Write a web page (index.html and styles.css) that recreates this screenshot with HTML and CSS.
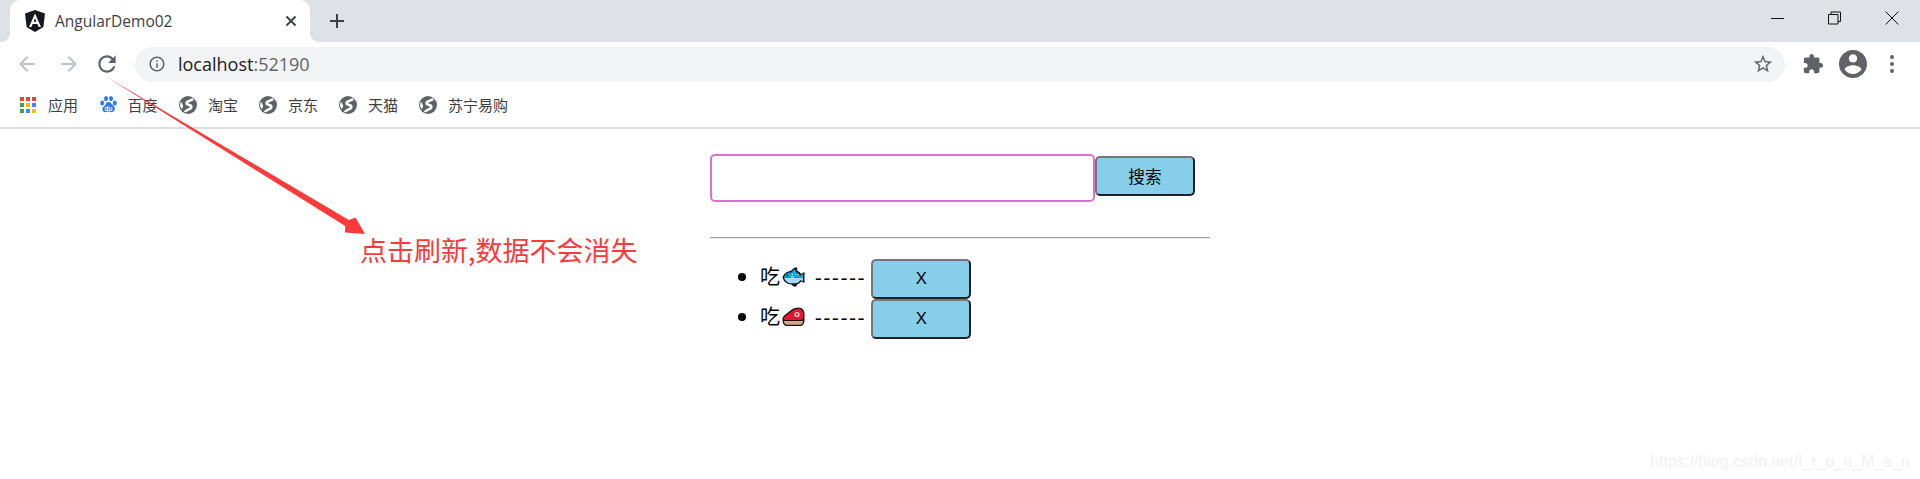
FILE: index.html
```html
<!DOCTYPE html>
<html lang="zh">
<head>
<meta charset="utf-8">
<title>AngularDemo02</title>
<link rel="stylesheet" href="styles.css">
</head>
<body>
<svg class="defs" width="0" height="0">
  <symbol id="globe" viewBox="0 0 18 18">
    <circle cx="9" cy="9" r="9" fill="#5f6368"/>
    <path d="M14 2.800C11.500 5.300 7.500 4.800 7.500 7.300 7.500 9.300 12.300 8.300 12.300 11 12.300 13.500 7.500 13 6 16" stroke="#fff" stroke-width="2.600" fill="none"/>
    <path d="M1.500 5.500C3 7.500 4 8 4 10S3 12 2.500 13L1 10Z" fill="#fff"/>
  </symbol>
</svg>

<header class="browser">
  <div class="tabbar">
    <div class="tab">
      <svg class="tab-logo" viewBox="0 0 20 22"><path d="M10 0 20 3.600 18.400 17 10 22 1.600 17 0 3.600Z" fill="#15181d"/><path d="M10 3.500 4 17h2.400l1.200-3h4.800l1.200 3H16ZM8.500 11.800 10 8.200l1.500 3.600Z" fill="#fff"/></svg>
      <span class="tab-title">AngularDemo02</span>
      <svg class="tab-close" viewBox="0 0 12 12"><path d="M1.500 1.500l9 9m0-9l-9 9" stroke="#3c4043" stroke-width="1.900" fill="none"/></svg>
    </div>
    <svg class="new-tab" viewBox="0 0 16 16"><path d="M8 1v14M1 8h14" stroke="#3c4043" stroke-width="2" fill="none"/></svg>
    <div class="window-controls">
      <svg class="win-icon" viewBox="0 0 14 14"><path d="M0 7.500h13" stroke="#111" fill="none"/></svg>
      <svg class="win-icon" viewBox="0 0 14 14"><path d="M.5 3.500h9.500v9.500H.5ZM3 3.500V1h9.500v9.500H10" stroke="#111" fill="none"/></svg>
      <svg class="win-icon" viewBox="0 0 14 14"><path d="M.5.500l13 13m0-13l-13 13" stroke="#111" fill="none"/></svg>
    </div>
  </div>

  <div class="toolbar">
    <svg class="nav-icon back" viewBox="0 0 24 24"><path d="M20 11H7.830l5.590-5.590L12 4l-8 8 8 8 1.410-1.410L7.830 13H20v-2z" fill="#bdc1c6"/></svg>
    <svg class="nav-icon forward" viewBox="0 0 24 24"><path d="M4 11h12.170l-5.590-5.590L12 4l8 8-8 8-1.410-1.410L16.170 13H4v-2z" fill="#bdc1c6"/></svg>
    <svg class="reload" viewBox="0 0 24 24"><path d="M17.650 6.350C16.200 4.900 14.210 4 12 4c-4.420 0-7.990 3.580-7.990 8s3.570 8 7.990 8c3.730 0 6.840-2.550 7.730-6h-2.080c-.82 2.330-3.040 4-5.650 4-3.310 0-6-2.690-6-6s2.690-6 6-6c1.660 0 3.140.69 4.220 1.780L13 11h7V4l-2.350 2.350z" fill="#5f6368"/></svg>
    <div class="omnibox">
      <svg class="info" viewBox="0 0 24 24"><path d="M11 7h2v2h-2zm0 4h2v6h-2zm1-9C6.480 2 2 6.480 2 12s4.480 10 10 10 10-4.480 10-10S17.520 2 12 2zm0 18c-4.410 0-8-3.590-8-8s3.590-8 8-8 8 3.590 8 8-3.590 8-8 8z" fill="#5f6368"/></svg>
      <span class="url">localhost<span class="port">:52190</span></span>
      <svg class="star" viewBox="0 0 24 24"><path d="M22 9.240l-7.190-.62L12 2 9.190 8.630 2 9.240l5.460 4.730L5.820 21 12 17.270 18.180 21l-1.630-7.030L22 9.240zM12 15.400l-3.760 2.270 1-4.280-3.320-2.880 4.380-.38L12 6.100l1.710 4.040 4.380.38-3.320 2.880 1 4.280L12 15.400z" fill="#5f6368"/></svg>
    </div>
    <svg class="puzzle" viewBox="0 0 24 24"><path d="M20.500 11H19V7c0-1.100-.9-2-2-2h-4V3.500C13 2.120 11.880 1 10.500 1S8 2.120 8 3.500V5H4c-1.100 0-1.990.9-1.990 2v3.800H3.500c1.490 0 2.700 1.210 2.700 2.700s-1.210 2.700-2.700 2.700H2V20c0 1.100.9 2 2 2h3.800v-1.500c0-1.490 1.210-2.700 2.700-2.700 1.490 0 2.700 1.210 2.700 2.700V22H17c1.100 0 2-.9 2-2v-4h1.500c1.380 0 2.500-1.120 2.500-2.500S21.880 11 20.500 11z" fill="#5f6368"/></svg>
    <svg class="avatar" viewBox="2 2 20 20"><path d="M12 2C6.480 2 2 6.480 2 12s4.480 10 10 10 10-4.480 10-10S17.520 2 12 2zm0 3c1.660 0 3 1.340 3 3s-1.340 3-3 3-3-1.340-3-3 1.340-3 3-3zm0 14.200c-2.500 0-4.710-1.280-6-3.220.03-1.990 4-3.080 6-3.080 1.990 0 5.970 1.090 6 3.080-1.290 1.940-3.500 3.220-6 3.220z" fill="#5f6368"/></svg>
    <svg class="menu" viewBox="0 0 6 20"><circle cx="3" cy="3" r="2" fill="#5f6368"/><circle cx="3" cy="10" r="2" fill="#5f6368"/><circle cx="3" cy="17" r="2" fill="#5f6368"/></svg>
  </div>

  <nav class="bookmarks">
    <a class="bookmark">
      <svg class="bm-icon" viewBox="0 0 16 16">
        <rect width="4" height="4" fill="#ea4335"/><rect x="6" width="4" height="4" fill="#ea4335"/><rect x="12" width="4" height="4" fill="#ea4335"/>
        <rect y="6" width="4" height="4" fill="#34a853"/><rect x="6" y="6" width="4" height="4" fill="#fbbc04"/><rect x="12" y="6" width="4" height="4" fill="#4285f4"/>
        <rect y="12" width="4" height="4" fill="#34a853"/><rect x="6" y="12" width="4" height="4" fill="#4285f4"/><rect x="12" y="12" width="4" height="4" fill="#fbbc04"/>
      </svg>应用</a>
    <a class="bookmark">
      <svg class="bm-icon paw" viewBox="0 0 17 17">
        <ellipse cx="2.200" cy="7" rx="2" ry="2.500" fill="#2b7bf0"/><ellipse cx="6" cy="2.600" rx="2" ry="2.600" fill="#2b7bf0"/><ellipse cx="11" cy="2.600" rx="2" ry="2.600" fill="#2b7bf0"/><ellipse cx="14.800" cy="7" rx="2" ry="2.500" fill="#2b7bf0"/>
        <path d="M8.500 6c2.500 0 3 2.200 4.500 3.200s2.300 2.800 1.700 4.500-2.200 2.500-3.500 2.500-1.700-.6-2.700-.6-1.500.6-3 .6-3.200-1-3.200-2.900S3.700 10.500 5 9.200 6 6 8.500 6Z" fill="#2b7bf0"/>
        <text class="du" x="8.500" y="14.600" text-anchor="middle">du</text>
      </svg>百度</a>
    <a class="bookmark"><svg class="bm-icon globe"><use href="#globe"/></svg>淘宝</a>
    <a class="bookmark"><svg class="bm-icon globe"><use href="#globe"/></svg>京东</a>
    <a class="bookmark"><svg class="bm-icon globe"><use href="#globe"/></svg>天猫</a>
    <a class="bookmark"><svg class="bm-icon globe"><use href="#globe"/></svg>苏宁易购</a>
  </nav>
</header>

<main class="app">
  <div class="search">
    <input class="search-input" type="text" aria-label="搜索">
    <button class="btn btn-search">搜索</button>
  </div>
  <hr class="rule">
  <ul class="todo">
    <li class="todo-item">吃<svg class="emoji" viewBox="0 0 23 20">
        <path d="M.5 10.500C1.500 7 4.500 4.500 8.500 4L12.500.5H15L15.500 4C17.500 4.500 18.500 6 19 7L22.500 5V16L19 14.500C18 16 16.500 17 15 17.500L14.500 19.500H11.500L9.500 17.500C5 17.500 1.500 14.500.5 10.500Z" fill="#0d1a22"/>
        <path d="M2 10C3 7.500 5.500 5.500 9.300 5.300L13 2 14 5.200C16 5.600 17.300 7.300 18 9L21 7V10Z" fill="#13a6e4"/>
        <path d="M2 10.500H21V14.300L18.300 13C17.500 15 15.500 16.300 13 16.300H10C6 16.300 3 14 2 10.500Z" fill="#a5daf2"/>
        <circle cx="5.500" cy="8.500" r="1.100" fill="#0d1a22"/>
        <path d="M10 7.500h1M13 7.500h1M16 7.500h1M9 10h3" stroke="#dff3fb" fill="none"/>
      </svg><span class="dashes">------</span><button class="btn btn-remove">X</button></li>
    <li class="todo-item">吃<svg class="emoji" viewBox="0 0 23 20">
        <path d="M.5 12.500C.5 9 3.500 7.500 6 5.500 8.500 3 12 .5 16.500.5 20.500.5 22.500 3.500 22.500 7.500V13.500C22.500 17 20.500 19 18 19H5C2 19 .5 16.500.5 12.500Z" fill="#16110f"/>
        <path d="M1.800 14H21.200C21 16.300 19.800 17.700 18 17.700H5C3.200 17.700 2 16.300 1.800 14Z" fill="#d9a68c"/>
        <path d="M1.800 12.500C1.800 9.800 4.500 8.600 7 6.600 9.500 4 12.500 1.800 16.500 1.800 19.500 1.800 21.200 4 21.200 7.500V10.500C21.200 12.200 19.800 13 18 13H3Z" fill="#e3172f"/>
        <circle cx="15" cy="7.500" r="2.600" fill="#f7d3d3"/>
        <circle cx="15" cy="7.500" r="1.200" fill="#e3172f"/>
      </svg><span class="dashes">------</span><button class="btn btn-remove">X</button></li>
  </ul>
</main>

<svg class="annotation-arrow" viewBox="0 0 270 170" width="270" height="170">
  <path d="M1 1 244.800 145 251.500 142.500 261 159 241 157.500 241.200 151Z" fill="#fb3a3c"/>
</svg>
<p class="annotation">点击刷新,数据不会消失</p>
<p class="watermark">https://blog.csdn.net/I_r_o_n_M_a_n</p>
</body>
</html>
```
FILE: styles.css
```css
* { box-sizing: border-box; }
html, body { margin: 0; height: 100%; }
body {
  position: relative;
  overflow: hidden;
  background: #fff;
  color: #000;
  font-family: "Liberation Sans", "Noto Sans CJK SC", sans-serif;
}
.defs { position: absolute; }
svg { display: block; flex: none; }

/* browser chrome */
.browser { border-bottom: 2px solid #dcdde2; height: 129px; }
.tabbar {
  display: flex;
  align-items: center;
  height: 42px;
  padding-left: 10px;
  background: #dee1e6;
}
.tab {
  position: relative;
  display: flex;
  align-items: center;
  align-self: stretch;
  width: 300px;
  padding: 0 13px 0 15px;
  background: #fff;
  border-radius: 10px 10px 0 0;
}
.tab::before,
.tab::after {
  content: "";
  position: absolute;
  bottom: 0;
  width: 8px;
  height: 8px;
}
.tab::before {
  left: -8px;
  background: radial-gradient(circle at 0 0, transparent 7.5px, #fff 8px);
}
.tab::after {
  right: -8px;
  background: radial-gradient(circle at 100% 0, transparent 7.5px, #fff 8px);
}
.tab-logo { width: 20px; height: 22px; }
.tab-title {
  margin-left: 10px;
  font: 15.5px "Open Sans", "Liberation Sans", sans-serif;
  color: #3c4043;
}
.tab-close { width: 12px; height: 12px; margin-left: auto; }
.new-tab { width: 16px; height: 16px; margin-left: 19px; }
.window-controls {
  display: flex;
  gap: 43px;
  margin-left: auto;
  padding-right: 21px;
  margin-top: -6px;
}
.win-icon { width: 14px; height: 14px; }

.toolbar {
  display: flex;
  align-items: center;
  height: 42px;
  padding-top: 2px;
  background: #fff;
}
.nav-icon { width: 24px; height: 24px; }
.back { margin-left: 15px; }
.forward { margin-left: 18px; }
.reload { width: 26px; height: 26px; margin-left: 13px; }
.omnibox {
  display: flex;
  align-items: center;
  width: 1650px;
  height: 35px;
  margin-left: 15px;
  padding: 0 11px 0 13px;
  background: #f1f3f4;
  border-radius: 18px;
}
.info { width: 18px; height: 18px; }
.url {
  margin-left: 12px;
  font: 18px "Open Sans", "Liberation Sans", sans-serif;
  color: #202124;
}
.port { color: #5f6368; }
.star { width: 22px; height: 22px; margin-left: auto; }
.puzzle { width: 22px; height: 22px; margin-left: 17px; }
.avatar { width: 28px; height: 28px; margin-left: 15px; }
.menu { width: 6px; height: 20px; margin-left: 22px; }

.bookmarks {
  display: flex;
  align-items: center;
  height: 43px;
  padding: 0 0 2px 20px;
  background: #fff;
}
.bookmark {
  display: flex;
  align-items: center;
  gap: 12px;
  width: 80px;
  font: 15px "Noto Sans CJK SC", sans-serif;
  color: #3c4043;
  white-space: nowrap;
}
.bm-icon { width: 16px; height: 16px; }
.paw { width: 17px; height: 17px; margin-right: -1.5px; }
.globe { width: 18px; height: 18px; margin-left: -1px; margin-right: -1px; }
.du { font: bold 6.5px "Liberation Sans", sans-serif; fill: #fff; }

/* the page */
.app { width: 500px; margin-left: 710px; padding-top: 25px; }
.search { display: flex; align-items: flex-start; }
.search-input {
  width: 385px;
  height: 48px;
  border: 2px solid #da70d6;
  border-radius: 5px;
  background: #fff;
  outline: none;
}
.btn {
  padding: 0;
  background: #87ceeb;
  border: 2px solid;
  border-color: #767676 #1f2226 #1f2226 #767676;
  border-radius: 5px;
  font: 16.67px "Liberation Sans", "Noto Sans CJK SC", sans-serif;
  color: #000;
}
.btn-search { width: 100px; height: 40px; margin-top: 2px; }
.rule {
  height: 2px;
  margin: 35px 0 0;
  border: 0;
  border-top: 1px solid #9c9c9c;
  border-bottom: 1px solid #eeeeee;
}
.todo {
  margin: 20px 0 0;
  padding: 0 0 0 50px;
  font: 20px "Noto Sans CJK SC", sans-serif;
}
.todo-item { height: 40px; white-space: nowrap; }
.emoji {
  display: inline-block;
  width: 23px;
  height: 20px;
  margin-left: 2px;
  vertical-align: -3px;
}
.dashes {
  margin-left: 10px;
  font: 20px "Liberation Serif", serif;
  letter-spacing: 1.9px;
}
.btn-remove { width: 100px; height: 40px; margin-left: 5px; vertical-align: middle; }

/* notes drawn over the screenshot */
.annotation-arrow { position: absolute; left: 104px; top: 75px; }
.annotation {
  position: absolute;
  left: 360px;
  top: 228px;
  margin: 0;
  font: 27px "Noto Sans CJK SC", sans-serif;
  line-height: 44px;
  color: #fb3a3c;
  white-space: nowrap;
}
.watermark {
  position: absolute;
  right: 10px;
  bottom: 8px;
  margin: 0;
  font: 16px "Liberation Sans", sans-serif;
  color: #f0f0f0;
}
```
